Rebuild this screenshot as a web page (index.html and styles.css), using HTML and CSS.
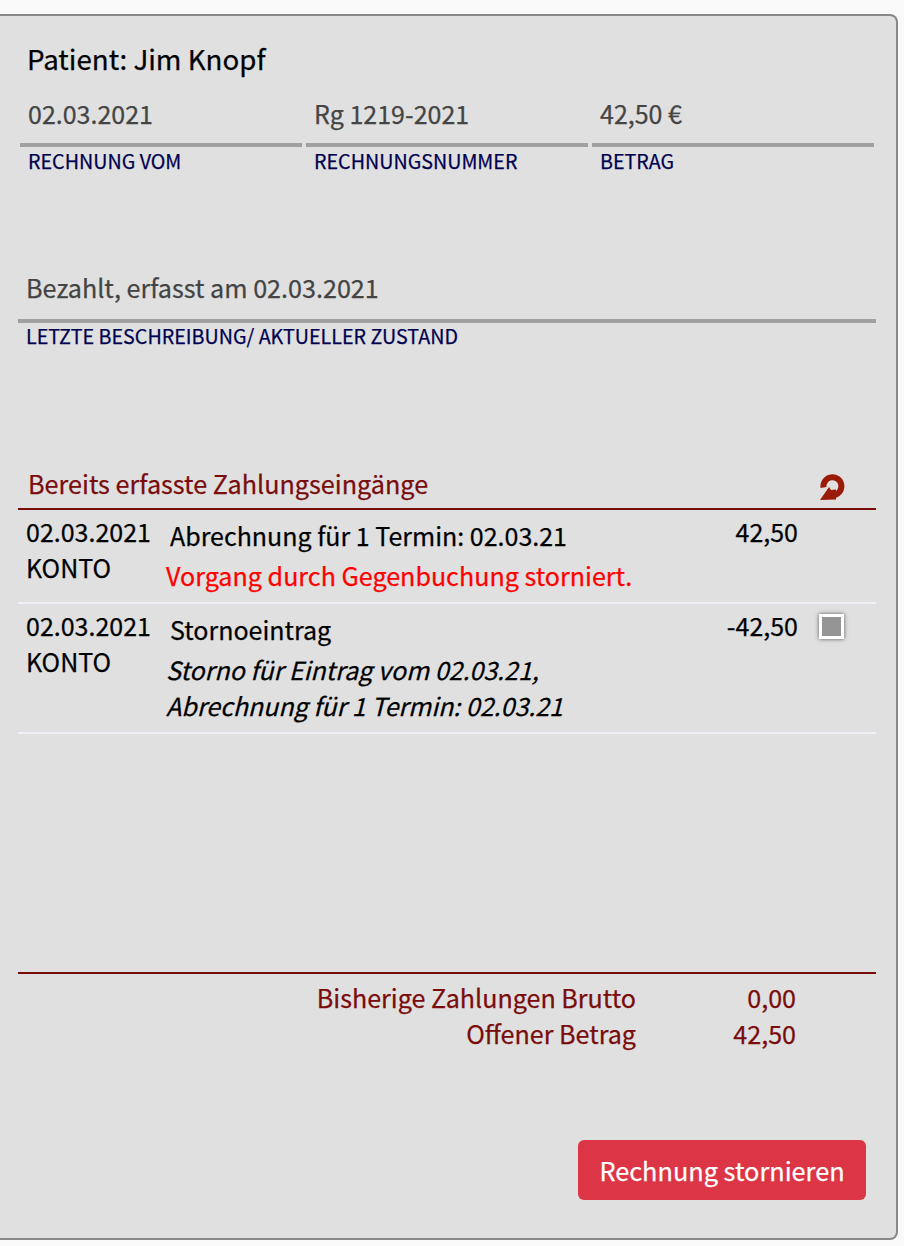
FILE: index.html
```html
<!DOCTYPE html>
<html lang="de">

<head>
    <meta charset="UTF-8">
    <meta name="viewport" content="width=device-width, initial-scale=1.0">
    <title>Rechnung</title>
    <link rel="stylesheet" href="styles.css">
</head>

<body>
    <div class="card">
        <h1 class="patient">Patient: Jim Knopf</h1>

        <div class="fields">
            <div class="field">
                <div class="field-value">02.03.2021</div>
                <div class="field-label">RECHNUNG VOM</div>
            </div>
            <div class="field">
                <div class="field-value">Rg 1219-2021</div>
                <div class="field-label">RECHNUNGSNUMMER</div>
            </div>
            <div class="field">
                <div class="field-value">42,50 €</div>
                <div class="field-label">BETRAG</div>
            </div>
        </div>

        <div class="state">
            <div class="state-value">Bezahlt, erfasst am 02.03.2021</div>
            <div class="state-label">LETZTE BESCHREIBUNG/ AKTUELLER ZUSTAND</div>
        </div>

        <div class="payments-head">
            <span>Bereits erfasste Zahlungseingänge</span>
            <svg class="reload" width="28" height="30" viewBox="0 0 28 30">
                <path d="M5.5 16.5 A9 9 0 1 1 16.5 24" fill="none" stroke="#9a1c08" stroke-width="6"/>
                <path d="M2 29 L11 16 L13 19 L18 18.5 L18 28.5 Z" fill="#9a1c08"/>
            </svg>
        </div>

        <div class="payment">
            <div class="pay-date">02.03.2021<br>KONTO</div>
            <div class="pay-text">
                <div class="pay-title">Abrechnung für 1 Termin: 02.03.21</div>
                <div class="pay-cancelled">Vorgang durch Gegenbuchung storniert.</div>
            </div>
            <div class="pay-amount">42,50</div>
            <div class="pay-check"></div>
        </div>

        <div class="payment">
            <div class="pay-date">02.03.2021<br>KONTO</div>
            <div class="pay-text">
                <div class="pay-title">Stornoeintrag</div>
                <div class="pay-note">Storno für Eintrag vom 02.03.21,<br>Abrechnung für 1 Termin: 02.03.21</div>
            </div>
            <div class="pay-amount">-42,50</div>
            <div class="pay-check"><span class="checkbox"></span></div>
        </div>

        <div class="totals">
            <div class="total-row">
                <span class="total-label">Bisherige Zahlungen Brutto</span>
                <span class="total-value">0,00</span>
            </div>
            <div class="total-row">
                <span class="total-label">Offener Betrag</span>
                <span class="total-value">42,50</span>
            </div>
        </div>

        <div class="actions">
            <button class="btn-cancel">Rechnung stornieren</button>
        </div>
    </div>
</body>

</html>
```

FILE: styles.css
```css
body {
    font-family: "Noto Sans CJK SC", "Noto Sans", sans-serif;
    -webkit-text-stroke: 0.25px;
    background-color: #fafafa;
    margin: 0;
    padding-top: 14px;
    color: #000;
}

.card {
    box-sizing: border-box;
    width: 898px;
    height: 1226px;
    background-color: #e0e0e0;
    border: 2px solid #888;
    border-left: none;
    border-radius: 0 8px 8px 0;
    padding: 0 20px 0 18px;
}

.patient {
    margin: 23px 0 0 9px;
    font-size: 27.7px;
    line-height: 38px;
    font-weight: 400;
}

.fields {
    display: grid;
    grid-template-columns: repeat(3, 282px);
    gap: 4px;
    margin: 18px 0 0 2px;
}

.field-value {
    font-size: 25px;
    line-height: 36px;
    color: #444;
    padding: 0 8px 12px;
    border-bottom: 4px solid #a0a0a0;
}

.field-label {
    font-size: 19.7px;
    line-height: 28px;
    color: #000050;
    padding-left: 8px;
}

.state {
    margin-top: 94px;
}

.state-value {
    font-size: 25.15px;
    line-height: 36px;
    color: #444;
    padding: 0 8px 14px;
    border-bottom: 4px solid #a0a0a0;
}

.state-label {
    font-size: 19.7px;
    line-height: 26px;
    color: #000050;
    padding-left: 8px;
}

.payments-head {
    display: flex;
    justify-content: space-between;
    align-items: center;
    margin-top: 109px;
    height: 50px;
    padding: 0 30px 0 10px;
    border-bottom: 2px solid #7a0c0c;
    font-size: 25.2px;
    color: #7a0c0c;
}

.reload {
    margin-top: 6px;
}

.payment {
    display: grid;
    grid-template-columns: 136px 540px 96px 1fr;
    padding: 3px 0 6px 8px;
    border-bottom: 2px solid #f0f0f8;
    font-size: 25px;
}

.pay-date {
    line-height: 36px;
}

.pay-title {
    line-height: 40px;
    padding: 2px 0 0 8px;
}

.pay-cancelled {
    line-height: 41px;
    font-size: 25.1px;
    color: #ff0000;
    padding-left: 4px;
}

.pay-note {
    font-style: italic;
    line-height: 36px;
    margin-top: 2px;
    padding: 0 0 3px 4px;
}

.pay-amount {
    text-align: right;
    line-height: 36px;
}

.pay-check {
    padding: 7px 0 0 21px;
}

.checkbox {
    display: block;
    box-sizing: border-box;
    width: 25px;
    height: 25px;
    background-color: #959595;
    border: 3px solid #fff;
    box-shadow: 0 0 4px #555;
}

.totals {
    margin-top: 238px;
    padding-top: 5px;
    border-top: 2px solid #7a0c0c;
    color: #7a0c0c;
    font-size: 25.1px;
}

.total-row {
    display: grid;
    grid-template-columns: 618px 160px;
    line-height: 36px;
}

.total-label,
.total-value {
    text-align: right;
}

.actions {
    display: flex;
    justify-content: flex-end;
    margin-top: 89px;
    padding-right: 10px;
}

.btn-cancel {
    width: 288px;
    height: 60px;
    font-family: inherit;
    font-size: 25.3px;
    color: #fff;
    background-color: #dc3545;
    border: none;
    border-radius: 6px;
    cursor: pointer;
}
```
